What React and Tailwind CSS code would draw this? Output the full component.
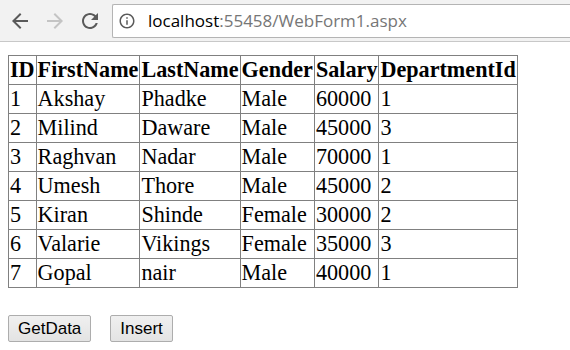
import React from 'react';

const rows = [
    ['1', 'Akshay', 'Phadke', 'Male', '60000', '1'],
    ['2', 'Milind', 'Daware', 'Male', '45000', '3'],
    ['3', 'Raghvan', 'Nadar', 'Male', '70000', '1'],
    ['4', 'Umesh', 'Thore', 'Male', '45000', '2'],
    ['5', 'Kiran', 'Shinde', 'Female', '30000', '2'],
    ['6', 'Valarie', 'Vikings', 'Female', '35000', '3'],
    ['7', 'Gopal', 'nair', 'Male', '40000', '1'],
];

const headers = ['ID', 'FirstName', 'LastName', 'Gender', 'Salary', 'DepartmentId'];

const Toolbar = () => (
    <div className="h-[42px] bg-[#f2f2f2] border-b border-[#c8c8c8] flex items-center">
        <div className="flex items-center pl-[8px] gap-[11px]">
            <svg width="24" height="24" viewBox="0 0 24 24" fill="#5a5a5a">
                <path d="M20 11H7.83l5.59-5.59L12 4l-8 8 8 8 1.41-1.41L7.83 13H20v-2z" />
            </svg>
            <svg width="24" height="24" viewBox="0 0 24 24" fill="#c4c4c4">
                <path d="M4 11h12.17l-5.59-5.59L12 4l8 8-8 8-1.41-1.41L16.17 13H4v-2z" />
            </svg>
            <svg width="24" height="24" viewBox="0 0 24 24" fill="#5a5a5a">
                <path d="M17.65 6.35C16.2 4.9 14.21 4 12 4c-4.42 0-7.99 3.58-7.99 8s3.57 8 7.99 8c3.73 0 6.84-2.55 7.73-6h-2.08c-.82 2.33-3.04 4-5.65 4-3.31 0-6-2.69-6-6s2.69-6 6-6c1.66 0 3.14.69 4.22 1.78L13 11h7V4l-2.35 2.35z" />
            </svg>
        </div>
        <div className="ml-[10px] flex-1 h-[34px] bg-white border border-[#b4b4b4] border-r-0 rounded-l-[2px] flex items-center">
            <svg className="ml-[5px]" width="18" height="18" viewBox="0 0 24 24" fill="#5a5a5a">
                <path d="M11 7h2v2h-2zm0 4h2v6h-2zm1-9C6.48 2 2 6.48 2 12s4.48 10 10 10 10-4.48 10-10S17.52 2 12 2zm0 18c-4.41 0-8-3.59-8-8s3.59-8 8-8 8 3.59 8 8-3.59 8-8 8z" />
            </svg>
            <span className="ml-[12px] text-[17px] font-['Open_Sans',sans-serif]">
                <span className="text-black">localhost</span>
                <span className="text-[#767676]">:55458/WebForm1.aspx</span>
            </span>
        </div>
    </div>
);

const App = () => {
    return (
        <div className="w-[570px] h-[350px] bg-white overflow-hidden">
            <Toolbar />
            <div className="px-[8px] pt-[13px] font-['Liberation_Serif',serif] text-[22.15px] text-black">
                <table className="border-collapse border border-[#808080]">
                    <thead>
                        <tr>
                            {headers.map(h => (
                                <th key={h} className="border border-[#808080] px-[1px] py-[1px] leading-[26px] font-bold text-center">
                                    {h}
                                </th>
                            ))}
                        </tr>
                    </thead>
                    <tbody>
                        {rows.map(r => (
                            <tr key={r[0]}>
                                {r.map((c, i) => (
                                    <td key={i} className="border border-[#808080] px-[1px] py-[1px] leading-[26px]">
                                        {c}
                                    </td>
                                ))}
                            </tr>
                        ))}
                    </tbody>
                </table>
                <div className="flex gap-[19px] mt-[27px] font-['Liberation_Sans',sans-serif]">
                    <button className="h-[27px] px-[9px] text-[17px] leading-none border border-[#adadad] rounded-[2px] bg-gradient-to-b from-[#f0f0f0] to-[#e3e3e3] text-black">
                        GetData
                    </button>
                    <button className="h-[27px] px-[9px] text-[17px] leading-none border border-[#adadad] rounded-[2px] bg-gradient-to-b from-[#f0f0f0] to-[#e3e3e3] text-black">
                        Insert
                    </button>
                </div>
            </div>
        </div>
    );
};

export default App;
